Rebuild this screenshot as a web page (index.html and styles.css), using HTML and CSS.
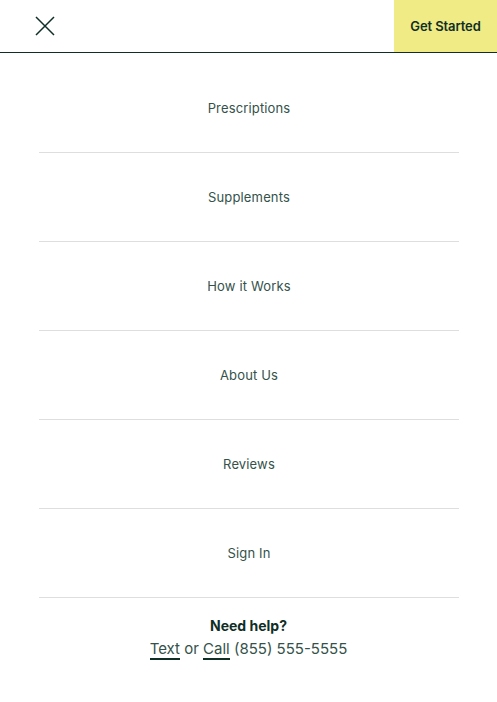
FILE: index.html
```html
<!DOCTYPE html>
<html lang="en">
<head>
<meta charset="utf-8">
<title>Menu</title>
<link rel="stylesheet" href="styles.css">
</head>
<body>
<header class="topbar">
  <button class="close" aria-label="Close menu">
    <svg width="20" height="20" viewBox="0 0 20 20"><path d="M1 1 L19 19 M19 1 L1 19" stroke="#0f2e26" stroke-width="1.5" fill="none"/></svg>
  </button>
  <a class="cta" href="#">Get Started</a>
</header>
<nav class="menu">
  <a class="item" href="#">Prescriptions</a>
  <a class="item" href="#">Supplements</a>
  <a class="item" href="#">How it Works</a>
  <a class="item" href="#">About Us</a>
  <a class="item" href="#">Reviews</a>
  <a class="item" href="#">Sign In</a>
</nav>
<div class="help">
  <div class="help-title">Need help?</div>
  <div class="help-line"><a href="#">Text</a> or <a href="#">Call</a> (855) 555-5555</div>
</div>
</body>
</html>
```
FILE: styles.css
```css
* { box-sizing: border-box; }
html, body { margin: 0; padding: 0; background: #fff; }
body { font-family: Inter, "Noto Sans", sans-serif; color: #1b3a31; }
.topbar {
  height: 53px;
  display: flex;
  align-items: stretch;
  justify-content: space-between;
  border-bottom: 1px solid #0f2e26;
}
.close {
  background: none;
  border: 0;
  padding: 0 0 0 35px;
  display: flex;
  align-items: center;
  cursor: pointer;
}
.cta {
  width: 103px;
  background: #f0eb85;
  color: #0f2e26;
  font-weight: 600;
  font-size: 13px;
  text-decoration: none;
  display: flex;
  align-items: center;
  justify-content: center;
  letter-spacing: -0.1px;
}
.menu {
  margin: 11px 38px 0 39px;
  display: flex;
  flex-direction: column;
}
.item {
  height: 89px;
  display: flex;
  align-items: center;
  justify-content: center;
  border-bottom: 1px solid #dedede;
  color: #34524a;
  text-decoration: none;
  font-size: 13px;
  font-weight: 400;
  letter-spacing: 0.15px;
}
.help {
  text-align: center;
  padding-top: 18px;
}
.help-title {
  font-weight: 700;
  font-size: 14px;
  color: #0f2e26;
  line-height: 20px;
}
.help-line {
  font-size: 15px;
  color: #34524a;
  line-height: 24px;
  margin-top: 1px;
}
.help-line a {
  color: #34524a;
  text-decoration: none;
  border-bottom: 2px solid #0f2e26;
}
```
